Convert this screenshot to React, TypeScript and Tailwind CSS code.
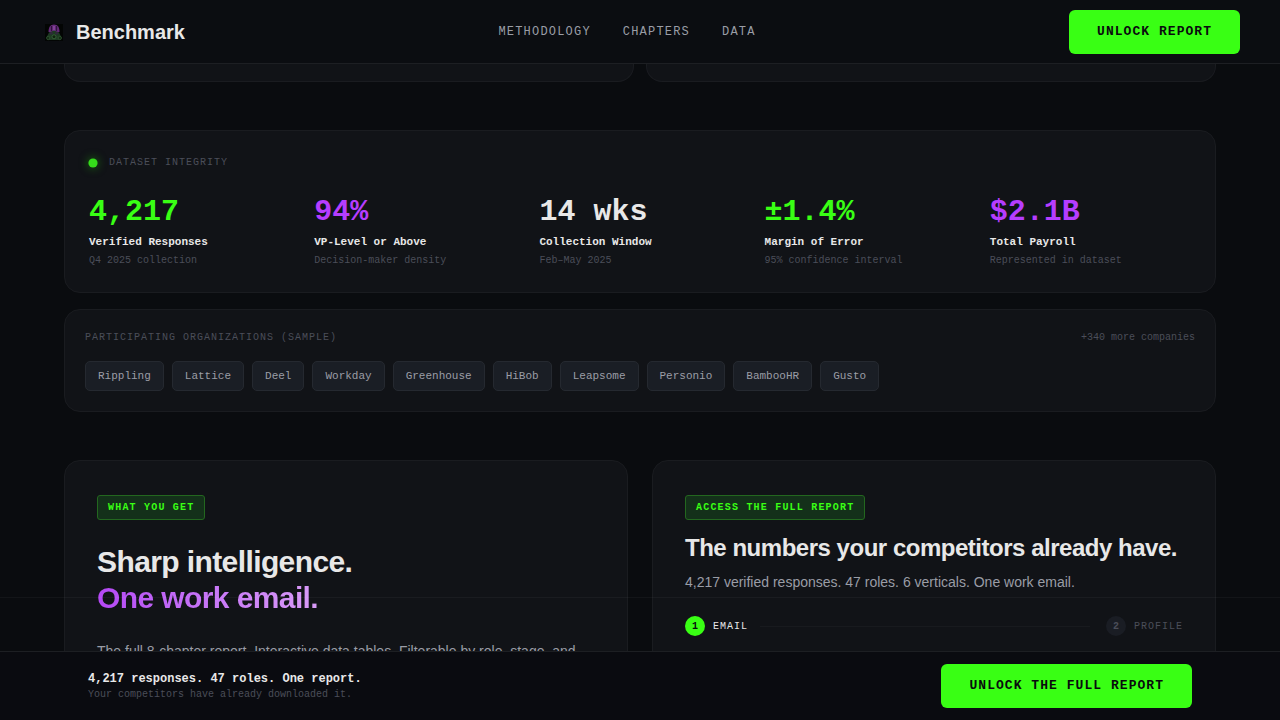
import type { ReactNode } from 'react'
import clsx from 'clsx'

interface Stat {
  value: string
  label: string
  note: string
  tone: 'green' | 'purple' | 'plain'
}

const NAV_LINKS = ['Methodology', 'Chapters', 'Data']

const STATS: Stat[] = [
  { value: '4,217', label: 'Verified Responses', note: 'Q4 2025 collection', tone: 'green' },
  { value: '94%', label: 'VP-Level or Above', note: 'Decision-maker density', tone: 'purple' },
  { value: '14 wks', label: 'Collection Window', note: 'Feb–May 2025', tone: 'plain' },
  { value: '±1.4%', label: 'Margin of Error', note: '95% confidence interval', tone: 'green' },
  { value: '$2.1B', label: 'Total Payroll', note: 'Represented in dataset', tone: 'purple' },
]

const ORGANIZATIONS = [
  'Rippling',
  'Lattice',
  'Deel',
  'Workday',
  'Greenhouse',
  'HiBob',
  'Leapsome',
  'Personio',
  'BambooHR',
  'Gusto',
]

const TONES = {
  green: 'text-[#39ff14]',
  purple: 'text-[#b63dff]',
  plain: 'text-[#e8e8e8]',
}

function LogoMark() {
  return (
    <svg viewBox="0 0 28 28" className="size-7" aria-hidden="true">
      <rect x="5" y="6" width="18" height="17" fill="#030504" />
      <path d="M8.500 14c0-4.500 1.500-7.500 5.500-7.500s5.500 3 5.500 7.500l-2.500 0.500h-6z" fill="#642a78" />
      <path d="M11.500 8v5M16.500 8v5" stroke="#2f143c" strokeWidth="1.200" />
      <path d="M13.200 8h1.600v4.500h-1.600z" fill="#8a48a0" />
      <path d="M9 14.500 14 12.500l5 2 2.500 5-2.500 2.500H9l-2.500-2.500z" fill="#1d3a22" />
      <ellipse cx="11.300" cy="15.300" rx="1.700" ry="1.200" fill="#30283a" />
      <ellipse cx="16.700" cy="15.300" rx="1.700" ry="1.200" fill="#30283a" />
      <circle cx="14" cy="18.800" r="2" fill="#10220f" stroke="#3a6a3e" strokeWidth="0.800" />
      <circle cx="8.200" cy="20" r="1.700" fill="#152c16" stroke="#315a33" strokeWidth="0.700" />
      <circle cx="19.800" cy="20" r="1.700" fill="#152c16" stroke="#315a33" strokeWidth="0.700" />
    </svg>
  )
}

function Card({ className, children }: { className?: string; children?: ReactNode }) {
  return (
    <section className={clsx('rounded-2xl border border-[#1a1c20] bg-[#111317]', className)}>
      {children}
    </section>
  )
}

function CtaButton({ children }: { children: ReactNode }) {
  return (
    <button
      type="button"
      className="h-11 shrink-0 rounded-md bg-[#39ff14] px-7 text-[13px] font-bold uppercase leading-5 tracking-[0.08em] text-[#0a0b0e]"
    >
      {children}
    </button>
  )
}

function Badge({ children }: { children: ReactNode }) {
  return (
    <span className="mt-0.5 block w-fit rounded-[3px] border border-[#23671f] bg-[#14301a] px-2.5 py-1 text-[10px] font-bold uppercase leading-[15px] tracking-[0.12em] text-[#39ff14]">
      {children}
    </span>
  )
}

function DatasetCard() {
  return (
    <Card className="p-6">
      <div className="flex items-center gap-3">
        <span className="size-2 scale-115 rounded-full bg-[#35dc1b] shadow-[0_0_8px_#1d7d10]" />
        <h2 className="text-[10px] uppercase leading-[15px] tracking-widest text-[#4b4e59]">
          Dataset Integrity
        </h2>
      </div>
      <dl className="mt-6 grid grid-cols-5 gap-6">
        {STATS.map((stat) => (
          <div key={stat.label} className="flex flex-col">
            <dd className={clsx('text-3xl font-bold leading-9', TONES[stat.tone])}>{stat.value}</dd>
            <dt className="mt-1 text-[11px] font-bold leading-[17px] text-[#e8e8e8]">
              {stat.label}
            </dt>
            <dd className="mt-0.5 text-[10px] leading-[15px] text-[#4b4e59]">{stat.note}</dd>
          </div>
        ))}
      </dl>
    </Card>
  )
}

function OrganizationsCard() {
  return (
    <Card className="mt-4 p-5">
      <div className="flex items-center justify-between text-[10px] leading-[15px] text-[#4b4e59]">
        <h2 className="uppercase tracking-widest">Participating Organizations (sample)</h2>
        <span>+340 more companies</span>
      </div>
      <ul className="mt-4 flex flex-wrap gap-2">
        {ORGANIZATIONS.map((name) => (
          <li
            key={name}
            className="rounded-[5px] border border-[#252930] bg-[#1a1e25] px-3 py-1.5 text-[11px] leading-4 text-[#9a9da6]"
          >
            {name}
          </li>
        ))}
      </ul>
    </Card>
  )
}

function PitchCard() {
  return (
    <Card className="p-8">
      <Badge>What you get</Badge>
      <h2 className="mt-6 font-['Liberation_Sans',sans-serif] text-3xl font-bold leading-9 tracking-[-0.02em] text-[#e8e8e8]">
        Sharp intelligence.
        <br />
        <span className="bg-linear-to-r from-[#b547f5] to-[#d99bf7] bg-clip-text text-transparent">
          One work email.
        </span>
      </h2>
      <p className="mt-6 font-['Liberation_Sans',sans-serif] text-sm leading-[22px] text-[#9a9da6]">
        The full 8-chapter report. Interactive data tables. Filterable by role, stage, and
      </p>
    </Card>
  )
}

function AccessCard() {
  return (
    <Card className="p-8">
      <Badge>Access the full report</Badge>
      <h2 className="mt-3 font-['Liberation_Sans',sans-serif] text-2xl font-bold leading-8 tracking-[-0.02em] text-[#e8e8e8]">
        The numbers your competitors already have.
      </h2>
      <p className="mt-2 font-['Liberation_Sans',sans-serif] text-sm leading-5 text-[#9a9da6]">
        4,217 verified responses. 47 roles. 6 verticals. One work email.
      </p>
      <ol className="mt-6 flex items-center text-[10px] uppercase">
        <li className="flex items-center gap-2 text-[#e8e8e8]">
          <span className="flex size-5 items-center justify-center rounded-full bg-[#39ff14] font-bold text-[#0a0b0e]">
            1
          </span>
          <span className="tracking-widest">Email</span>
        </li>
        <li aria-hidden="true" className="ml-3 mr-4 h-px flex-1 bg-[#181a1e]" />
        <li className="flex items-center gap-2 text-[#4b4e59]">
          <span className="flex size-5 items-center justify-center rounded-full bg-[#1a1d24] font-bold">
            2
          </span>
          <span className="tracking-widest">Profile</span>
        </li>
      </ol>
    </Card>
  )
}

export default function App() {
  return (
    <div className="relative flex h-screen flex-col overflow-hidden bg-[#0a0c0f] font-['Liberation_Mono',monospace]">
      <header className="flex h-16 shrink-0 items-center justify-between border-b border-[#1d1f23] bg-[#0b0d11] px-10">
        <a href="#top" className="flex items-center gap-2">
          <LogoMark />
          <span className="font-['Liberation_Sans',sans-serif] text-xl font-bold text-[#e8e8e8]">
            Benchmark
          </span>
        </a>
        <nav className="flex gap-8 text-xs uppercase leading-[18px] tracking-widest text-[#9a9da6]">
          {NAV_LINKS.map((link) => (
            <a key={link} href={`#${link.toLowerCase()}`}>
              {link}
            </a>
          ))}
        </nav>
        <CtaButton>Unlock Report</CtaButton>
      </header>

      <main className="min-h-0 flex-1 overflow-hidden px-16">
        <div className="mx-auto max-w-6xl">
          {/* Tail end of the chapter cards, scrolled under the header */}
          <div className="mb-12 grid grid-cols-2 gap-3">
            <Card className="h-[18px] rounded-t-none border-t-0" />
            <Card className="h-[18px] rounded-t-none border-t-0" />
          </div>
          <DatasetCard />
          <OrganizationsCard />
          <div className="mt-12 grid grid-cols-2 gap-6">
            <PitchCard />
            <AccessCard />
          </div>
        </div>
      </main>

      <footer className="shrink-0 border-t border-[#1d1f23] bg-[#0a0b10] px-16 py-3">
        <div className="mx-auto flex max-w-6xl items-center justify-between px-6">
          <div>
            <p className="text-xs font-bold leading-4 text-[#e8e8e8]">
              4,217 responses. 47 roles. One report.
            </p>
            <p className="text-[10px] leading-[15px] text-[#4b4e59]">
              Your competitors have already downloaded it.
            </p>
          </div>
          <CtaButton>Unlock the Full Report</CtaButton>
        </div>
      </footer>

      {/* Scanline */}
      <div
        aria-hidden="true"
        className="pointer-events-none absolute inset-x-0 bottom-[17%] h-px bg-white/4"
      />
    </div>
  )
}
